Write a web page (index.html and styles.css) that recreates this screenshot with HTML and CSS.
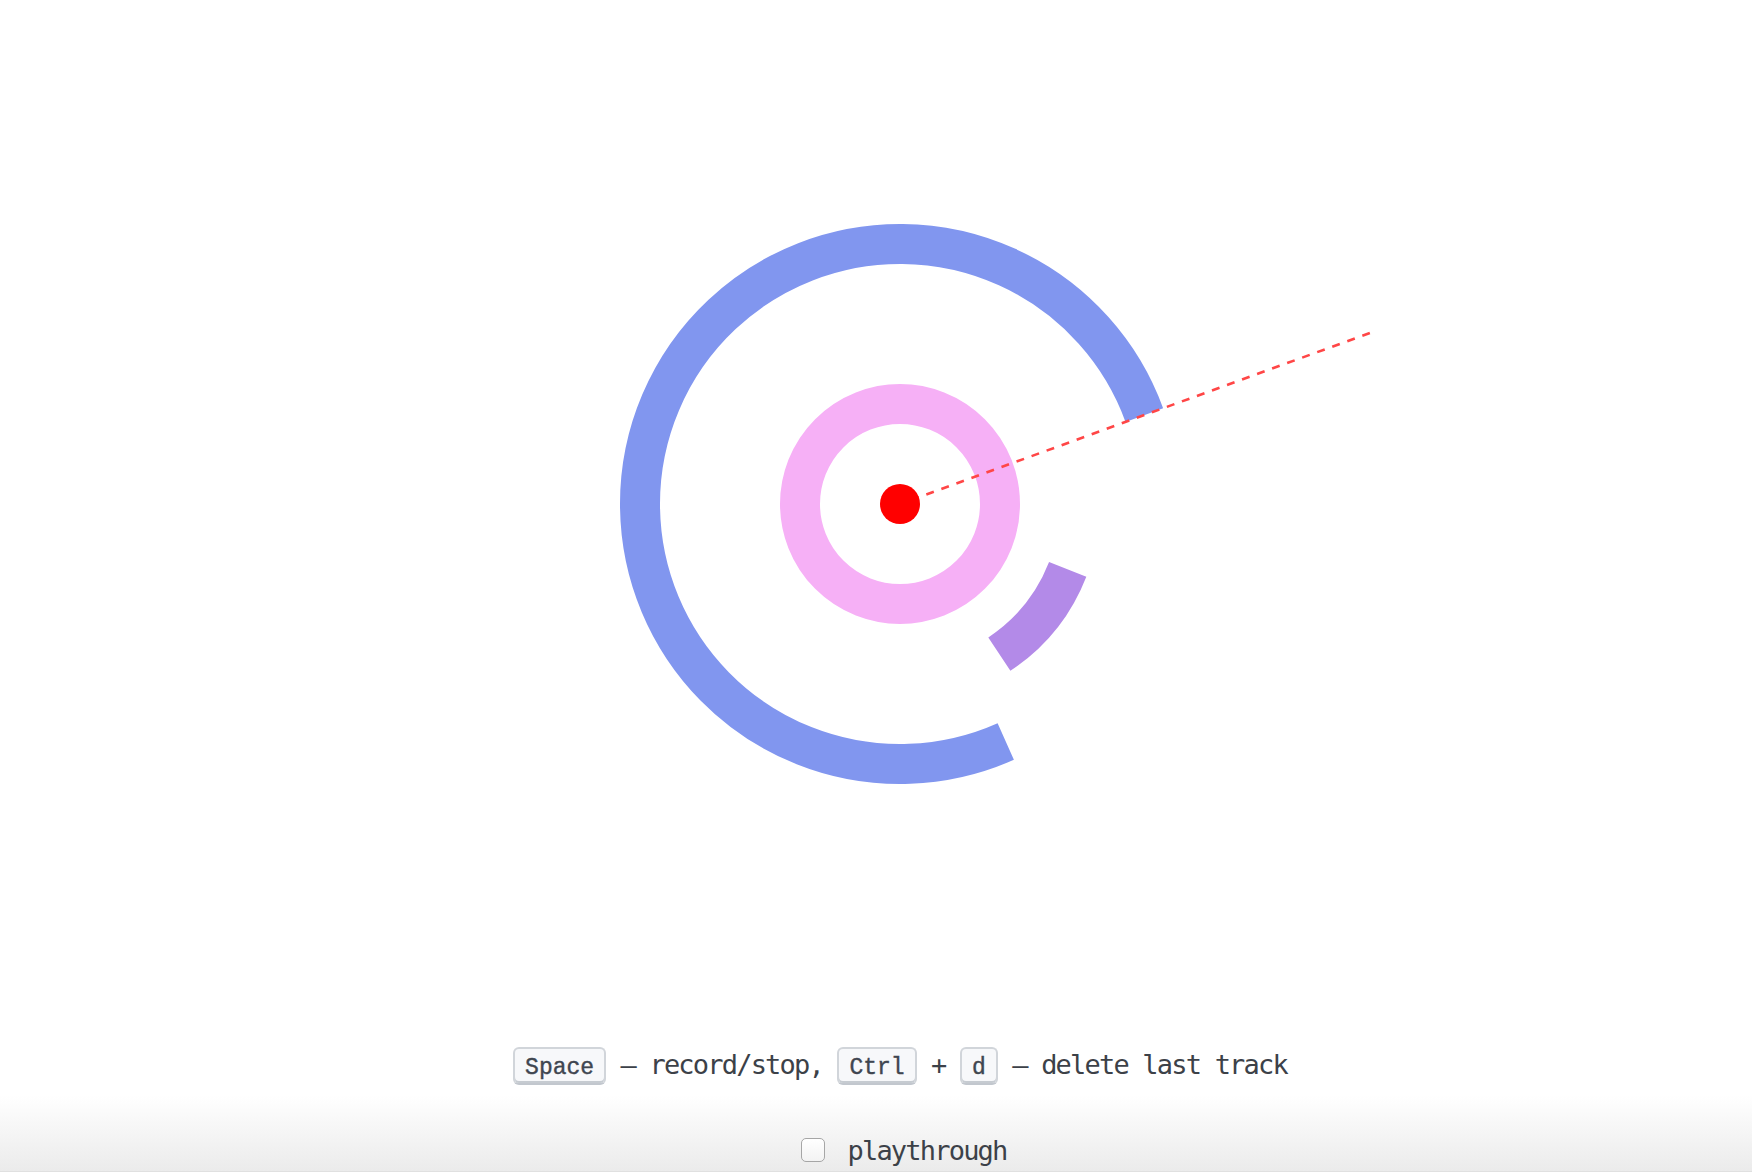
FILE: index.html
```html
<!DOCTYPE html>
<html lang="en">
<head>
<meta charset="utf-8">
<title>Looper</title>
<link rel="stylesheet" href="styles.css">
</head>
<body>
<div class="page">
  <div class="stage">
    <svg class="tracks" width="1000" height="1008" viewBox="-500 -504 1000 1008" xmlns="http://www.w3.org/2000/svg">
      <path class="track track-blue" d="M105.75 237.52 A260 260 0 1 1 244.32 -88.93"/>
      <circle class="track track-pink" cx="0" cy="0" r="100"/>
      <path class="track track-purple" d="M167.70 65.39 A180 180 0 0 1 99.35 150.10"/>
      <line class="cursor" x1="469.85" y1="-171.01" x2="0" y2="0"/>
      <circle class="dot" cx="0" cy="0" r="20"/>
    </svg>
  </div>
  <p class="keys"><kbd>Space</kbd> – record/stop, <kbd>Ctrl</kbd> + <kbd>d</kbd> – delete last track</p>
  <footer class="footer">
    <label class="option"><input type="checkbox" class="check"><span>playthrough</span></label>
  </footer>
</div>
</body>
</html>
```

FILE: styles.css
```css
html, body {
  margin: 0;
  padding: 0;
  background: #ffffff;
}

body {
  font-family: "DejaVu Sans Mono", "Liberation Mono", monospace;
  color: #3c4148;
}

.page {
  box-sizing: border-box;
  height: 1172px;
  display: flex;
  flex-direction: column;
  overflow: hidden;
}

.stage {
  display: flex;
  justify-content: center;
  height: 1008px;
  padding-left: 48px;
  flex: none;
}

.tracks {
  display: block;
}

.track {
  fill: none;
  stroke-width: 40;
}

.track-blue { stroke: #8196ef; }
.track-pink { stroke: #f6b0f6; }
.track-purple { stroke: #b38ae8; }

.cursor {
  stroke: #ff4646;
  stroke-width: 2.6;
  stroke-dasharray: 8 8;
}

.dot { fill: #ff0000; }

.keys {
  margin: 39px 0 0;
  padding-left: 48px;
  text-align: center;
  font-size: 27px;
  letter-spacing: -1.8px;
  line-height: 36px;
  flex: none;
}

kbd {
  display: inline-block;
  font-family: "Liberation Mono", "DejaVu Sans Mono", monospace;
  font-size: 23px;
  font-weight: 400;
  letter-spacing: 0;
  line-height: 20px;
  padding: 9px 10px 5px;
  color: #3f4650;
  background: #f7f8fa;
  border: 2px solid #d1d5da;
  border-bottom-color: #c2c7ce;
  border-radius: 6px;
  box-shadow: inset 0 -2px 0 #c6cbd1;
  vertical-align: baseline;
  -webkit-text-stroke: 0.4px #3f4650;
}

.footer {
  flex: 1;
  display: flex;
  justify-content: center;
  align-items: center;
  padding: 44px 0 0 48px;
  background: linear-gradient(#ffffff 0%, #ffffff 12%, #ebebeb 100%);
  border-bottom: 1px solid #e0e0e0;
}

.option {
  display: flex;
  align-items: center;
  font-size: 27px;
  letter-spacing: -1.8px;
  line-height: 1;
}

.check {
  appearance: none;
  -webkit-appearance: none;
  box-sizing: border-box;
  width: 24px;
  height: 24px;
  margin: 0 22px 0 8px;
  border: 1.5px solid #a6a6a6;
  border-radius: 5px;
  background: linear-gradient(#ffffff, #f3f3f3);
}
```
